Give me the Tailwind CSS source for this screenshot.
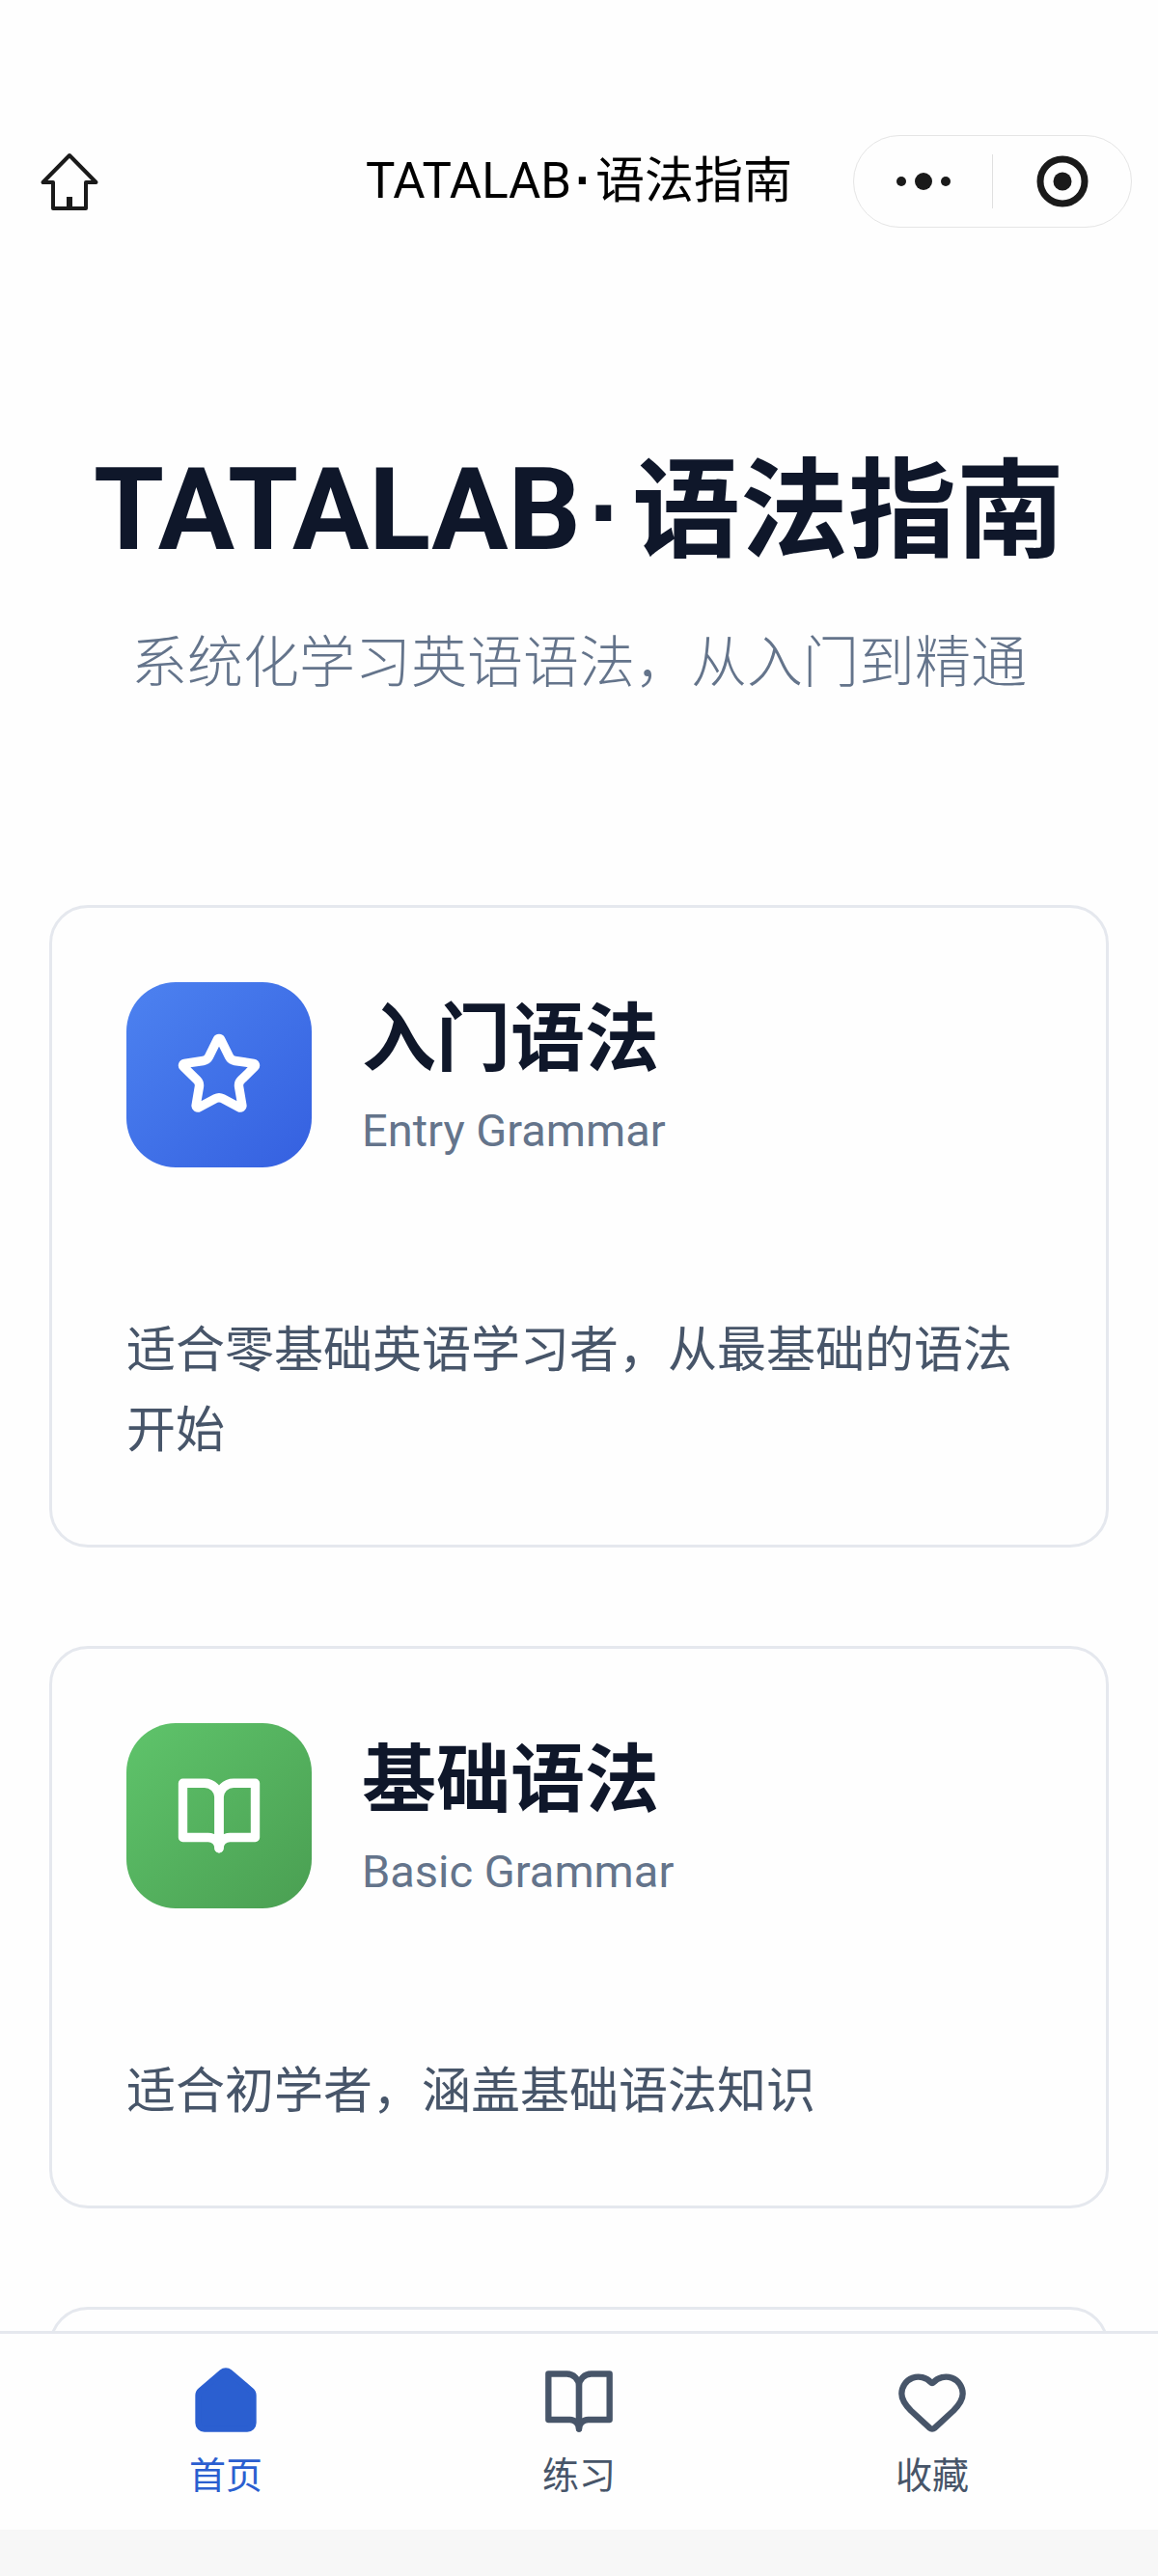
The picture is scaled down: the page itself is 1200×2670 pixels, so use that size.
<!DOCTYPE html>
<html lang="zh-CN">

<head>
   <meta charset="UTF-8">
   <meta name="viewport" content="width=device-width, initial-scale=1.0">
   <title>TATALAB·语法指南</title>
   <script src="https://cdn.jsdelivr.net/npm/@tailwindcss/browser@4"></script>
</head>

<body class="bg-[#fefefe] font-[Roboto,'Noto_Sans_CJK_SC',sans-serif] text-[#0f172a]">
   <div class="flex flex-col h-screen overflow-hidden">

      <!-- Title bar -->
      <header class="shrink-0 grid grid-cols-[1fr_auto_1fr] items-center pt-[140px] px-[27px]">
         <button type="button" aria-label="主页" class="w-16 h-16 ml-[13px]">
            <svg class="w-16 h-16" viewBox="0 0 64 64" fill="none" stroke="#1a1a1a" stroke-width="4" stroke-linejoin="round">
               <path d="M32 5 L4.500 33 H15 V60 H49 V33 H59.500 Z" />
               <path d="M32 48 V60" stroke-width="6" />
            </svg>
         </button>
         <p class="text-[51px] leading-[76px] text-black">TATALAB<span class="mx-1 font-['Liberation_Sans'] font-bold">·</span>语法指南</p>
         <div class="justify-self-end flex items-center w-[289px] h-24 rounded-full border border-[#e5e5e5]">
            <button type="button" aria-label="更多" class="flex-1 flex justify-center items-center">
               <svg class="w-14 h-5" viewBox="0 0 56 20" fill="#1a1a1a">
                  <circle cx="5" cy="10" r="5" />
                  <circle cx="28" cy="10" r="9" />
                  <circle cx="51" cy="10" r="5" />
               </svg>
            </button>
            <span class="w-px h-14 bg-[#e0e0e0]"></span>
            <button type="button" aria-label="关闭" class="flex-1 flex justify-center items-center">
               <svg class="w-[54px] h-[54px]" viewBox="0 0 54 54">
                  <circle cx="27" cy="27" r="23" fill="none" stroke="#1a1a1a" stroke-width="7" />
                  <circle cx="27" cy="27" r="9.500" fill="#1a1a1a" />
               </svg>
            </button>
         </div>
      </header>

      <main class="flex-1 min-h-0 overflow-hidden px-[51px]">
         <section class="text-center pt-[221px] pb-[205px]">
            <h1 class="text-[112px] leading-[144px] font-bold"><span class="text-[118px]">TATALAB</span><span class="mx-2 font-['Liberation_Sans']">·</span>语法指南</h1>
            <p class="mt-[38px] text-[58px] leading-[92px] font-light text-[#64748b]">系统化学习英语语法，从入门到精通</p>
         </section>

         <div class="flex flex-col gap-[102px]">
            <a href="#entry" class="block border-[3px] border-[#e5e8ee] rounded-[40px] p-[77px]">
               <div class="flex items-center gap-[52px] mb-[148px]">
                  <div class="shrink-0 flex items-center justify-center w-48 h-48 rounded-[51px] bg-linear-to-br from-[#4d82f0] to-[#3560e0]">
                     <svg class="w-[90px] h-[90px]" viewBox="0 0 24 24" fill="none" stroke="white" stroke-width="2.500" stroke-linecap="round" stroke-linejoin="round">
                        <path d="M11.525 2.295a.53.53 0 0 1 .95 0l2.310 4.679a2.123 2.123 0 0 0 1.595 1.160l5.166.756a.53.53 0 0 1 .294.904l-3.736 3.638a2.123 2.123 0 0 0-.611 1.878l.882 5.140a.53.53 0 0 1-.771.560l-4.618-2.428a2.122 2.122 0 0 0-1.973 0L6.396 21.010a.53.53 0 0 1-.770-.560l.881-5.139a2.122 2.122 0 0 0-.611-1.879L2.160 9.795a.53.53 0 0 1 .294-.906l5.165-.755a2.122 2.122 0 0 0 1.597-1.160z" />
                     </svg>
                  </div>
                  <div class="pt-2">
                     <h2 class="text-[77px] leading-[96px] font-bold">入门语法</h2>
                     <p class="mt-3 text-[47px] leading-[68px] text-[#64748b]">Entry Grammar</p>
                  </div>
               </div>
               <p class="text-[51px] leading-[83px] text-[#475569]">适合零基础英语学习者，从最基础的语法开始</p>
            </a>

            <a href="#basic" class="block border-[3px] border-[#e5e8ee] rounded-[40px] p-[77px]">
               <div class="flex items-center gap-[52px] mb-[148px]">
                  <div class="shrink-0 flex items-center justify-center w-48 h-48 rounded-[51px] bg-linear-to-br from-[#5fc46b] to-[#4a9f52]">
                     <svg class="w-[90px] h-[90px]" viewBox="0 0 24 24" fill="none" stroke="white" stroke-width="2.500" stroke-linecap="round" stroke-linejoin="round">
                        <path d="M2 3h6a4 4 0 0 1 4 4v14a3 3 0 0 0-3-3H2z" />
                        <path d="M22 3h-6a4 4 0 0 0-4 4v14a3 3 0 0 1 3-3h7z" />
                     </svg>
                  </div>
                  <div class="pt-2">
                     <h2 class="text-[77px] leading-[96px] font-bold">基础语法</h2>
                     <p class="mt-3 text-[47px] leading-[68px] text-[#64748b]">Basic Grammar</p>
                  </div>
               </div>
               <p class="text-[51px] leading-[83px] text-[#475569]">适合初学者，涵盖基础语法知识</p>
            </a>

            <!-- next card, mostly below the fold -->
            <div class="border-[3px] border-[#e5e8ee] rounded-[40px] p-[77px] h-[583px]"></div>
         </div>
      </main>

      <!-- Tab bar -->
      <nav class="shrink-0 grid grid-cols-3 border-t-[3px] border-[#e5e8ee] bg-[#fefefe] px-[51px] pt-8 pb-7 text-[38px] leading-[56px] text-[#475569]">
         <a href="#home" class="flex flex-col items-center gap-[11px] text-[#2b5fd0]">
            <svg class="w-[76px] h-[76px]" viewBox="0 0 24 24" fill="currentColor" stroke="currentColor" stroke-width="2" stroke-linejoin="round">
               <path d="M3 10a2 2 0 0 1 .709-1.528l7-5.999a2 2 0 0 1 2.582 0l7 5.999A2 2 0 0 1 21 10v9a2 2 0 0 1-2 2H5a2 2 0 0 1-2-2z" />
            </svg>
            首页
         </a>
         <a href="#practice" class="flex flex-col items-center gap-[11px]">
            <svg class="w-[76px] h-[76px]" viewBox="0 0 24 24" fill="none" stroke="currentColor" stroke-width="2" stroke-linecap="round" stroke-linejoin="round">
               <path d="M2 3h6a4 4 0 0 1 4 4v14a3 3 0 0 0-3-3H2z" />
               <path d="M22 3h-6a4 4 0 0 0-4 4v14a3 3 0 0 1 3-3h7z" />
            </svg>
            练习
         </a>
         <a href="#favorites" class="flex flex-col items-center gap-[11px]">
            <svg class="w-[76px] h-[76px]" viewBox="0 0 24 24" fill="none" stroke="currentColor" stroke-width="2" stroke-linecap="round" stroke-linejoin="round">
               <path d="M2 9.500a5.500 5.500 0 0 1 9.591-3.676.56.56 0 0 0 .818 0A5.490 5.490 0 0 1 22 9.500c0 2.290-1.500 4-3 5.500l-6.200 5.700a1.200 1.200 0 0 1-1.600 0L5 15c-1.500-1.500-3-3.200-3-5.500" />
            </svg>
            收藏
         </a>
      </nav>
      <div class="shrink-0 h-12 bg-[#f7f7f7]"></div>
   </div>
</body>

</html>
